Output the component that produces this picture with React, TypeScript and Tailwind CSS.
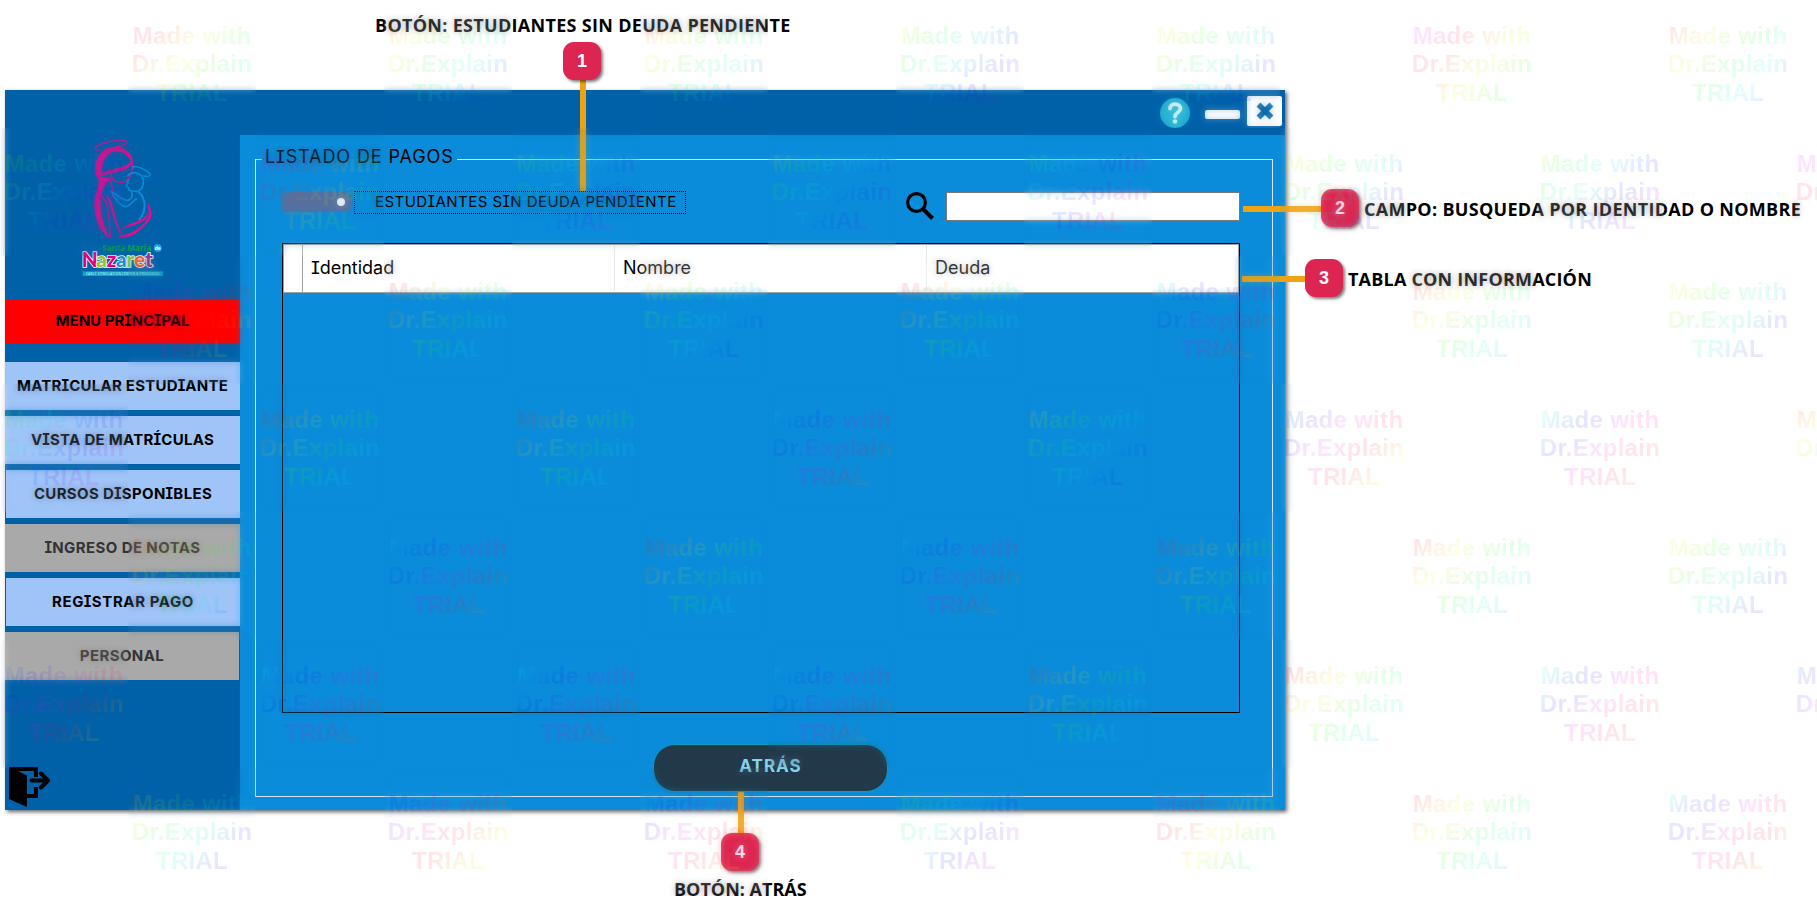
import React from "react";

const ui = "font-[Inter,'Open_Sans',sans-serif]";

type MenuEntry = { label: string; box: string; text: string };

const menu: MenuEntry[] = [
  { label: "MATRICULAR ESTUDIANTE", box: "w-[235px] bg-[#9fc4f8] text-black", text: "tracking-[0.25px]" },
  { label: "VISTA DE MATRÍCULAS", box: "w-[235px] bg-[#9fc4f8] text-black", text: "tracking-[0.3px]" },
  { label: "CURSOS DISPONIBLES", box: "ml-px w-[234px] bg-[#9fc4f8] text-black", text: "tracking-[0.35px]" },
  { label: "INGRESO DE NOTAS", box: "w-[235px] bg-[#a9a9a9] text-[#333]", text: "tracking-[0.4px]" },
  { label: "REGISTRAR PAGO", box: "ml-px w-[234px] bg-[#9fc4f8] text-black", text: "tracking-[0.6px]" },
  { label: "PERSONAL", box: "w-[234px] bg-[#a9a9a9] text-[#333]", text: "tracking-[0.4px]" },
];

// The interface lettering has a capital I with bars, so each I takes the monospaced cut.
function Lettering({ text }: { text: string }) {
  return (
    <>
      {text.split(/(I|Í)/).map((part, i) =>
        part === "I" || part === "Í" ? (
          <span key={i} className="-mx-[0.06em] font-['DejaVu_Sans_Mono',monospace] leading-none">
            {part}
          </span>
        ) : (
          part
        ),
      )}
    </>
  );
}

function Logo() {
  const letters: [string, string, number][] = [
    ["N", "#e6007e", 35],
    ["a", "#8cc63f", 79],
    ["z", "#e6007e", 110],
    ["a", "#1b8fd6", 138],
    ["r", "#7ac943", 169],
    ["e", "#f15a24", 192],
    ["t", "#93278f", 225],
  ];
  return (
    <svg viewBox="0 0 300 450" className="h-[150px] w-[100px]" fill="none" strokeLinecap="round">
      <g fill="#dc0f8c">
        <path d="M80 142 C64 92 96 48 138 50 C178 54 196 84 187 112 C185 84 164 64 136 64 C112 66 97 92 94 132 Z" />
        <path d="M82 143 C100 112 156 122 188 92 C180 130 122 122 82 143 Z" />
        <path d="M84 138 C92 166 76 186 74 210 C70 260 90 308 121 327 C102 290 88 250 92 208 C94 182 104 160 124 145 C110 144 96 142 84 138 Z" />
        <path d="M104 192 C136 206 132 280 160 318 C128 296 128 224 104 192 Z" />
        <path d="M233 218 C250 244 248 262 236 274 C206 312 172 332 140 318 C176 318 232 286 237 252 Z" />
        <path d="M146 306 C168 276 216 282 238 244 C232 290 172 282 146 306 Z" />
      </g>
      <g stroke="#dc0f8c" strokeWidth="4">
        <path d="M86 61 C62 60 80 42 120 34 C158 26 182 33 166 43 C158 49 148 50 138 50" />
        <path d="M187 102 C190 132 172 160 148 158 C132 156 123 146 124 130" />
        <path d="M150 120 C156 126 164 126 168 120 M172 120 L182 118" strokeWidth="2" />
        <path d="M122 150 C122 170 136 186 128 200 M94 200 C120 210 116 286 122 322" />
      </g>
      <g stroke="#0a8cdb" strokeWidth="4.5">
        <path d="M188 114 C186 104 214 112 228 122 C248 136 242 142 220 138" strokeWidth="4" />
        <path d="M172 138 C186 122 216 126 220 152 C222 172 210 186 196 184 C180 184 174 180 176 174 C166 170 168 164 174 160 C170 156 172 152 176 150" />
        <path d="M184 184 C192 204 176 214 166 210 C150 206 136 190 124 184 C134 208 148 226 166 230 C182 228 186 214 200 206" />
        <path d="M206 186 C230 206 228 246 208 268" strokeWidth="6" />
      </g>
      <text x="97" y="362" fill="#0fa04a" className="font-['Open_Sans',sans-serif] text-[24px] font-bold" textLength="146">
        Santa María
      </text>
      <circle cx="263" cy="354" r="12" fill="#1b9fe0" />
      <text x="254" y="360" fill="#fff" className="font-['Open_Sans',sans-serif] text-[15px] font-bold">
        de
      </text>
      <g className="font-[Lato,sans-serif] text-[62px] font-black">
        {letters.map(([ch, color, x], i) => (
          <text key={i} x={x} y="411" fill={color} stroke="#fff" strokeWidth="5" paintOrder="stroke">
            {ch}
          </text>
        ))}
      </g>
      <rect x="38" y="424" width="241" height="14" fill="#12a5c4" />
      <text x="48" y="435" fill="#c9f0f6" className="font-['Open_Sans',sans-serif] text-[10px]" textLength="222">
        EARLY STIMULATION CENTER &amp; PRESCHOOL
      </text>
    </svg>
  );
}

function ExitIcon() {
  return (
    <svg viewBox="0 0 41 40" className="h-[40px] w-[41px]">
      <path d="M0 0 H29 V10 H25 V4 H9 L18 8.5 V27 H25 V20 H29 V31 H18 V40 L0 32 Z" fill="#000" />
      <path d="M22.500 13.500 H38 M32 6.500 L39 13.500 L32 20.500" fill="none" stroke="#000" strokeWidth="4" strokeLinecap="round" strokeLinejoin="round" />
    </svg>
  );
}

function Sidebar() {
  return (
    <aside className="flex h-[720px] w-[235px] flex-col items-start bg-[#0061a9]">
      <div className="mt-[40px] ml-[65px] h-[150px]">
        <Logo />
      </div>
      <button className="mt-[19px] h-[44px] w-[235px] bg-[#ff0000] pb-px text-[15px] leading-[20px] font-bold text-black">
        <Lettering text="MENU PRINCIPAL" />
      </button>
      <nav className="mt-[19px] flex flex-col gap-[6px]">
        {menu.map((m) => (
          <button key={m.label} className={`h-[48px] text-[15px] leading-[20px] font-bold whitespace-nowrap ${m.box}`}>
            <span className={m.text}>
              <Lettering text={m.label} />
            </span>
          </button>
        ))}
      </nav>
      <div className="mt-[87px] ml-[4px]">
        <ExitIcon />
      </div>
    </aside>
  );
}

function TitleBar() {
  return (
    <header className="flex h-[45px] justify-end bg-[#0061a9] pr-[3px]">
      <div className="mt-[8px] mr-[15px] flex h-[30px] w-[30px] items-center justify-center rounded-full bg-[#27b4d4]">
        <svg viewBox="0 0 30 30" className="h-[30px] w-[30px]" fill="none">
          <path d="M10 10.500 C10 4.500 20.500 5 20.500 10.500 C20.500 14.500 15 14.500 15 18.500" stroke="#e3f6fa" strokeWidth="3.800" strokeLinecap="round" />
          <circle cx="15" cy="23.500" r="2.300" fill="#e3f6fa" />
        </svg>
      </div>
      <div className="mt-[20px] mr-[7px] h-[9px] w-[35px] rounded-[2px] bg-white" />
      <div className="mt-[6px] flex h-[30px] w-[35px] items-center justify-center rounded-[2px] bg-white">
        <svg viewBox="0 0 18 18" className="h-[18px] w-[18px]">
          <path d="M2.500 2.500 L15.500 15.500 M15.500 2.500 L2.500 15.500" stroke="#0061a9" strokeWidth="5.500" />
        </svg>
      </div>
    </header>
  );
}

function Payments() {
  return (
    <fieldset className="mt-[13px] ml-[15px] h-[649px] w-[1018px] border border-[#d6e4ee]">
      <legend className="ml-[6px] h-[22px] w-[195px] pl-[3px] text-[18px] leading-[16px] tracking-[0.9px] whitespace-nowrap text-black">
        <Lettering text="LISTADO DE PAGOS" />
      </legend>
      <div className="mt-[21px] ml-[26px] flex">
        <div className="mt-px flex h-[20px] w-[69px] items-center justify-end rounded-[5px] bg-[#55709f] pr-[6px]">
          <div className="h-[8px] w-[8px] rounded-full bg-white" />
        </div>
        <div className="ml-[3px] h-[23px] w-[332px] border border-dotted border-black pl-[20px] text-[15px] leading-[19px] tracking-[0.47px] whitespace-nowrap text-black">
          <Lettering text="ESTUDIANTES SIN DEUDA PENDIENTE" />
        </div>
        <svg viewBox="0 0 28 28" className="mt-px ml-[220px] h-[28px] w-[28px]" fill="none" stroke="#000">
          <circle cx="10.500" cy="10.500" r="8.900" strokeWidth="3.200" />
          <path d="M17.500 17.500 L26.500 26.500" strokeWidth="4" />
        </svg>
        <div className="mt-px ml-[12px] h-[29px] w-[294px] border border-[#7a7a7a] bg-white" />
      </div>
      <div className="mt-[22px] ml-[26px] h-[470px] w-[958px] border border-black">
        <div className="flex h-[49px] w-full items-center border border-[#a0a0a0] bg-white pb-px text-[18px] leading-[24px] text-black">
          <div className="h-[47px] w-[19px] border-r border-[#a0a0a0]" />
          <div className="flex h-full w-[312px] items-center border-r border-[#e5e5e5] pl-[8px]">
            <span>
              <Lettering text="Identidad" />
            </span>
          </div>
          <div className="flex h-full w-[312px] items-center border-r border-[#e5e5e5] pl-[8px]">Nombre</div>
          <div className="flex h-full items-center pl-[8px]">Deuda</div>
        </div>
      </div>
      <button className="mt-[31px] ml-[397px] block h-[48px] w-[235px] rounded-[22px] border border-[#0a9db8] bg-[#22394a] pb-[3px] text-[17px] font-bold tracking-[1px] text-[#86d3ee]">
        ATRÁS
      </button>
    </fieldset>
  );
}

function Badge({ n, place }: { n: number; place: string }) {
  return (
    <div
      className={`absolute flex h-[38px] w-[38px] items-center justify-center rounded-[11px] bg-[#dc2551] font-['Liberation_Sans',sans-serif] text-[18px] font-bold text-white shadow-[2px_2px_3px_rgba(0,0,0,0.5)] ${place}`}
    >
      {n}
    </div>
  );
}

function Note({ children, place }: { children: React.ReactNode; place: string }) {
  return (
    <div className={`absolute font-['Open_Sans',sans-serif] text-[18px] leading-[24px] font-bold whitespace-nowrap text-black ${place}`}>
      {children}
    </div>
  );
}

// Starting hue of each stamp, one list per 128px row; odd rows start at x = 0.
const stampHues: number[][] = [
  [340, 40, 30, 90, 60, 300, 20],
  [100, 300, 100, 90, 140, 60, 100, 300],
  [230, 0, 60, 0, 200, 10, 60],
  [120, 0, 0, 200, 60, 220, 190, 30],
  [20, 200, 0, 200, 350, 10, 60],
  [220, 190, 190, 200, 10, 0, 190, 230],
  [60, 240, 220, 110, 310, 10, 200],
];

function rainbow(hue: number) {
  const stops: string[] = [];
  for (let i = 0; i <= 12; i++) {
    stops.push(`hsla(${(hue + 300 + i * 27.7) % 360}, 100%, 50%, 0.105)`);
  }
  return `linear-gradient(135deg, ${stops.join(", ")})`;
}

function Stamps() {
  return (
    <div className="pointer-events-none absolute inset-0 overflow-hidden">
      {stampHues.map((row, r) =>
        row.map((hue, c) => {
          const style = { left: c * 256 + (r % 2 === 0 ? 128 : 0), top: r * 128 };
          return (
            <React.Fragment key={`${r}-${c}`}>
              <div className="absolute h-[128px] w-[128px] opacity-30 backdrop-blur-[3px]" style={style} />
              <div
                className="absolute h-[128px] w-[128px] bg-clip-text pt-[21.5px] text-center font-['Liberation_Sans',sans-serif] text-[24px] leading-[28.5px] font-bold tracking-[0.3px] whitespace-nowrap text-transparent"
                style={{ ...style, backgroundImage: rainbow(hue) }}
              >
                Made with
                <br />
                Dr.Explain
                <br />
                TRIAL
              </div>
            </React.Fragment>
          );
        }),
      )}
    </div>
  );
}

export default function App() {
  return (
    <div className="relative h-[917px] w-[1817px] overflow-hidden bg-white pt-[90px] pl-[5px]">
      <div className={`flex h-[720px] w-[1280px] shadow-[2px_2px_4px_rgba(0,0,0,0.6)] ${ui}`}>
        <Sidebar />
        <main className="h-[720px] w-[1045px] bg-[#0a8cda]">
          <TitleBar />
          <Payments />
        </main>
      </div>

      <div className="absolute top-[80px] left-[580px] h-[111px] w-[6px] bg-[#f0a312]" />
      <div className="absolute top-[206px] left-[1243px] h-[6px] w-[78px] bg-[#f0a312]" />
      <div className="absolute top-[276px] left-[1242px] h-[6px] w-[64px] bg-[#f0a312]" />
      <div className="absolute top-[792px] left-[738px] h-[42px] w-[6px] bg-[#f0a312]" />
      <Badge n={1} place="left-[563px] top-[42px]" />
      <Badge n={2} place="left-[1321px] top-[189px]" />
      <Badge n={3} place="left-[1305px] top-[259px]" />
      <Badge n={4} place="left-[721px] top-[833px]" />
      <Note place="left-[375px] top-[13px] tracking-[0.3px]">BOTÓN: ESTUDIANTES SIN DEUDA PENDIENTE</Note>
      <Note place="left-[1364px] top-[197px] tracking-[0.3px]">CAMPO: BUSQUEDA POR IDENTIDAD O NOMBRE</Note>
      <Note place="left-[1348px] top-[267px] tracking-[0.2px]">TABLA CON INFORMACIÓN</Note>
      <Note place="left-[674px] top-[877px]">BOTÓN: ATRÁS</Note>
      <Stamps />
    </div>
  );
}
